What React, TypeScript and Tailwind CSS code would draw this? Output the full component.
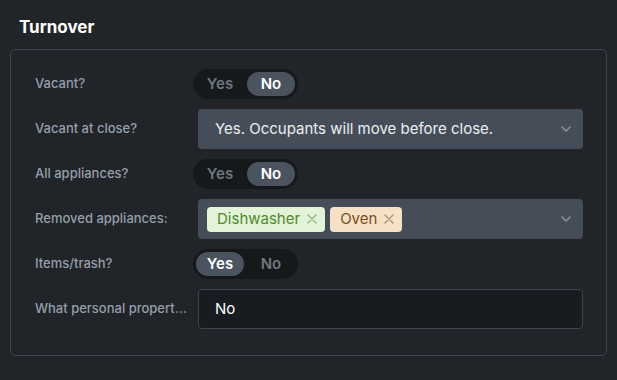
import React from "react";

type Choice = "yes" | "no";

function YesNo({ value }: { value: Choice }) {
  const base = "flex h-[24px] w-[48px] items-center justify-center rounded-full text-[15px] font-semibold";
  return (
    <div className="-ml-[5px] inline-flex h-[30px] items-center gap-[3px] self-start rounded-full bg-[#16191c] p-[3px]">
      <span className={value === "yes" ? `${base} bg-[#4a535e] text-white` : `${base} text-[#6f7780]`}>Yes</span>
      <span className={value === "no" ? `${base} bg-[#4a535e] text-white` : `${base} text-[#6f7780]`}>No</span>
    </div>
  );
}

function Chevron() {
  return (
    <svg width="10" height="6" viewBox="0 0 10 6" fill="none" className="shrink-0">
      <path d="M1 1l4 4 4-4" stroke="#8b949e" strokeWidth="1.5" strokeLinecap="round" strokeLinejoin="round" />
    </svg>
  );
}

function Cross({ color }: { color: string }) {
  return (
    <svg width="10" height="10" viewBox="0 0 10 10" fill="none" className="shrink-0">
      <path d="M1 1l8 8M9 1l-8 8" stroke={color} strokeWidth="1.4" strokeLinecap="round" />
    </svg>
  );
}

function Field({ label, children }: { label: string; children: React.ReactNode }) {
  return (
    <div className="flex items-center">
      <div className="w-[163px] shrink-0 pr-[8px]">
        <div className="truncate text-[13px] font-medium text-[#959fab]">{label}</div>
      </div>
      <div className="flex min-w-0 flex-1">{children}</div>
    </div>
  );
}

export default function App() {
  return (
    <div className="h-[380px] w-[617px] bg-[#212529] px-[10px] pt-[15px] font-['Inter',sans-serif]">
      <h2 className="mb-[10px] ml-[9px] h-[24px] text-[17px] leading-[24px] font-bold text-white">Turnover</h2>

      <section className="flex w-[597px] flex-col gap-[10px] rounded-[5px] border border-[#3f454d] pt-[19px] pr-[23px] pb-[26px] pl-[24px]">
        <Field label="Vacant?">
          <YesNo value="no" />
        </Field>

        <Field label="Vacant at close?">
          <div className="flex h-[40px] flex-1 items-center justify-between rounded-[4px] bg-[#454e58] pr-[12px] pl-[17px]">
            <span className="text-[15px] text-[#eceef0]">Yes. Occupants will move before close.</span>
            <Chevron />
          </div>
        </Field>

        <Field label="All appliances?">
          <YesNo value="no" />
        </Field>

        <Field label="Removed appliances:">
          <div className="flex h-[40px] flex-1 items-center justify-between rounded-[4px] bg-[#454e58] pr-[12px] pl-[9px]">
            <div className="flex items-center gap-[5px]">
              <span className="flex h-[25px] items-center gap-[7px] rounded-[4px] bg-[#e3f3d7] pr-[8px] pl-[10px] text-[15px] text-[#4e8a2b]">
                Dishwasher
                <Cross color="#92b77c" />
              </span>
              <span className="flex h-[25px] items-center gap-[7px] rounded-[4px] bg-[#f7e1c6] pr-[8px] pl-[10px] text-[15px] text-[#7a4d1a]">
                Oven
                <Cross color="#ad9070" />
              </span>
            </div>
            <Chevron />
          </div>
        </Field>

        <Field label="Items/trash?">
          <YesNo value="yes" />
        </Field>

        <Field label="What personal property remains?">
          <div className="flex h-[40px] flex-1 items-center rounded-[4px] border border-[#3f454d] bg-[#181b1f] pl-[16px] text-[15px] text-white">
            No
          </div>
        </Field>
      </section>
    </div>
  );
}
